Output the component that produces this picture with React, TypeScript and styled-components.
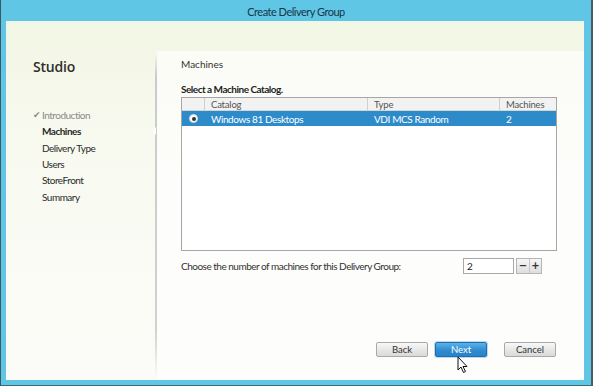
import React from "react";
import styled, { createGlobalStyle } from "styled-components";

const Global = createGlobalStyle`
  html, body { margin: 0; padding: 0; background: #3c4a55; }
  body { font-family: Lato, "Open Sans", sans-serif; }
  * { box-sizing: border-box; }
`;

const Window = styled.div`
  width: 593px;
  height: 386px;
  display: flex;
  flex-direction: column;
  background: #5fc6e6;
  border-left: 1px solid #3a5866;
  border-right: 2px solid #4d5a62;
  border-bottom: 1px solid #3a6a7a;
  position: relative;
  overflow: hidden;
`;

const TitleBar = styled.div`
  height: 21px;
  flex: none;
  display: flex;
  align-items: center;
  justify-content: center;
  font-size: 11px;
  letter-spacing: -0.5px;
  color: #173646;
  padding-top: 1px;
`;

const Client = styled.div`
  flex: 1;
  margin: 0 7px 5px 5px;
  display: flex;
  background: linear-gradient(180deg, #f2f6e4 0%, #f8faf0 35%, #fbfcf8 100%);
`;

const Sidebar = styled.div`
  width: 149px;
  flex: none;
  display: flex;
  flex-direction: column;
  padding: 36px 0 0 27px;
`;

const Brand = styled.div`
  font-family: "Open Sans", sans-serif;
  font-size: 14px;
  font-weight: 600;
  letter-spacing: -0.2px;
  color: #2e2e2e;
  line-height: 20px;
  height: 20px;
`;

const Nav = styled.div`
  margin-top: 30px;
  display: flex;
  flex-direction: column;
`;

const NavItem = styled.div<{ $state?: "done" | "active" | "todo" }>`
  height: 16.3px;
  line-height: 16px;
  font-size: 10px;
  letter-spacing: -0.5px;
  display: flex;
  align-items: center;
  padding-left: ${(p) => (p.$state === "done" ? "0" : "9px")};
  color: ${(p) => (p.$state === "done" ? "#8a8a8a" : "#2a2a2a")};
  font-weight: ${(p) => (p.$state === "active" ? 700 : 400)};
  position: relative;
`;

const Check = styled.span`
  width: 9px;
  font-size: 9px;
  color: #8a8a8a;
  font-family: "DejaVu Sans", sans-serif;
`;

const Notch = styled.span`
  position: absolute;
  right: -1px;
  top: 4px;
  width: 0;
  height: 0;
  border-top: 4px solid transparent;
  border-bottom: 4px solid transparent;
  border-right: 4px solid #fdfdfb;
`;

const Panel = styled.div`
  flex: 1;
  margin-top: 30px;
  background: linear-gradient(180deg, #fbfcf6 0%, #fdfdfb 40%, #fdfdfc 100%);
  border-left: 2px solid;
  border-image: linear-gradient(180deg, rgba(200,200,200,0) 0%, #c9cbc8 8%, #d0d2ce 85%, rgba(210,210,210,0) 100%) 1;
  display: flex;
  flex-direction: column;
  padding: 0 27px 23px 24px;
`;

const Heading = styled.div`
  font-size: 10px;
  color: #333;
  line-height: 14px;
  margin-top: 6px;
`;

const Prompt = styled.div`
  font-size: 10px;
  letter-spacing: -0.5px;
  color: #1e1e1e;
  font-weight: 700;
  line-height: 14px;
  margin-top: 11px;
`;

const Table = styled.div`
  margin-top: 1px;
  height: 154px;
  border: 1px solid #a6a6a6;
  background: #fff;
  display: flex;
  flex-direction: column;
`;

const Row = styled.div<{ $head?: boolean; $selected?: boolean }>`
  display: grid;
  grid-template-columns: 23px 163px 132px 1fr;
  height: ${(p) => (p.$head ? "13px" : "15px")};
  background: ${(p) => (p.$head ? "#f2f2f2" : p.$selected ? "#2e8bca" : "#fff")};
  color: ${(p) => (p.$head ? "#555" : p.$selected ? "#fff" : "#222")};
  border-bottom: ${(p) => (p.$head ? "1px solid #d4d4d4" : "none")};
  font-size: ${(p) => (p.$head ? "9.5px" : "10px")};
  letter-spacing: ${(p) => (p.$head ? "-0.2px" : "-0.4px")};
`;

const Cell = styled.div<{ $head?: boolean; $last?: boolean }>`
  display: flex;
  align-items: center;
  padding-left: 6px;
  white-space: nowrap;
  overflow: hidden;
  border-right: ${(p) => (p.$head && !p.$last ? "1px solid #cfcfcf" : "none")};
`;

const RadioCell = styled.div`
  display: flex;
  align-items: center;
  justify-content: center;
`;

const Radio = styled.span`
  width: 9px;
  height: 9px;
  border-radius: 50%;
  background: #fff;
  border: 1px solid #d8d8d8;
  display: flex;
  align-items: center;
  justify-content: center;
  &::after {
    content: "";
    width: 4px;
    height: 4px;
    border-radius: 50%;
    background: #333;
  }
`;

const CountRow = styled.div`
  margin-top: 7px;
  display: flex;
  align-items: center;
  height: 16px;
`;

const CountLabel = styled.div`
  font-size: 10px;
  letter-spacing: -0.5px;
  color: #333;
  width: 282px;
`;

const NumberBox = styled.div`
  width: 51px;
  height: 16px;
  border: 1px solid #a8a8a8;
  background: #fff;
  font-size: 10px;
  color: #222;
  padding-left: 3px;
  line-height: 14px;
`;

const Spin = styled.div`
  margin-left: 2px;
  display: flex;
  border: 1px solid #b5b5b5;
  height: 16px;
`;

const SpinButton = styled.div`
  width: 12px;
  display: flex;
  align-items: center;
  justify-content: center;
  background: linear-gradient(180deg, #f6f6f6, #dedede);
  font-family: "DejaVu Sans", sans-serif;
  font-size: 10px;
  font-weight: 700;
  color: #333;
  line-height: 1;
  & + & { border-left: 1px solid #c4c4c4; }
`;

const Spacer = styled.div`
  flex: 1;
`;

const Buttons = styled.div`
  display: flex;
  justify-content: flex-end;
  padding-right: 1px;
`;

const Button = styled.div<{ $primary?: boolean; $gap?: number }>`
  width: 52px;
  height: 15px;
  margin-left: ${(p) => p.$gap ?? 0}px;
  border-radius: 2px;
  display: flex;
  align-items: center;
  justify-content: center;
  font-size: 9.5px;
  border: 1px solid ${(p) => (p.$primary ? "#1f6fae" : "#a9a9a9")};
  background: ${(p) =>
    p.$primary
      ? "linear-gradient(180deg, #5db2e8 0%, #2f8ccf 55%, #2a83c6 100%)"
      : "linear-gradient(180deg, #f8f8f8 0%, #e6e6e6 55%, #dadada 100%)"};
  color: ${(p) => (p.$primary ? "#fff" : "#333")};
  box-shadow: ${(p) => (p.$primary ? "0 0 0 1px rgba(60,150,220,0.35)" : "none")};
`;

const Cursor = styled.svg`
  position: absolute;
  left: 456px;
  top: 356px;
`;

export default function App() {
  return (
    <>
      <Global />
      <Window>
        <TitleBar>Create Delivery Group</TitleBar>
        <Client>
          <Sidebar>
            <Brand>Studio</Brand>
            <Nav>
              <NavItem $state="done">
                <Check>✔</Check>Introduction
              </NavItem>
              <NavItem $state="active">
                Machines
                <Notch />
              </NavItem>
              <NavItem>Delivery Type</NavItem>
              <NavItem>Users</NavItem>
              <NavItem>StoreFront</NavItem>
              <NavItem>Summary</NavItem>
            </Nav>
          </Sidebar>
          <Panel>
            <Heading>Machines</Heading>
            <Prompt>Select a Machine Catalog.</Prompt>
            <Table>
              <Row $head>
                <Cell $head />
                <Cell $head>Catalog</Cell>
                <Cell $head>Type</Cell>
                <Cell $head $last>Machines</Cell>
              </Row>
              <Row $selected>
                <RadioCell>
                  <Radio />
                </RadioCell>
                <Cell>Windows 81 Desktops</Cell>
                <Cell>VDI MCS Random</Cell>
                <Cell>2</Cell>
              </Row>
            </Table>
            <CountRow>
              <CountLabel>Choose the number of machines for this Delivery Group:</CountLabel>
              <NumberBox>2</NumberBox>
              <Spin>
                <SpinButton>−</SpinButton>
                <SpinButton>+</SpinButton>
              </Spin>
            </CountRow>
            <Spacer />
            <Buttons>
              <Button>Back</Button>
              <Button $primary $gap={7}>Next</Button>
              <Button $gap={17}>Cancel</Button>
            </Buttons>
          </Panel>
        </Client>
        <Cursor width="12" height="18" viewBox="0 0 12 18">
          <path d="M1 1 L1 14 L4 11 L6.5 16.5 L8.5 15.5 L6 10.5 L10 10.5 Z" fill="#fff" stroke="#111" strokeWidth="1" strokeLinejoin="round" />
        </Cursor>
      </Window>
    </>
  );
}
